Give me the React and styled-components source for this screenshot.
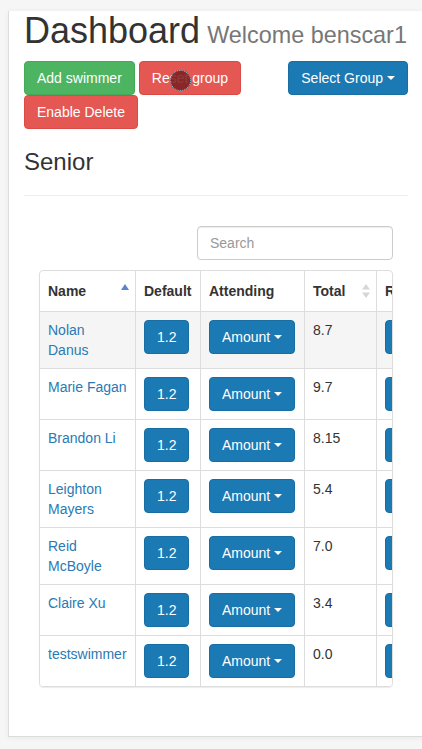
import React from "react";
import styled, { createGlobalStyle, css } from "styled-components";

const GlobalStyle = createGlobalStyle`
  html, body {
    margin: 0;
    padding: 0;
    overflow: hidden;
    background: #f6f6f6;
  }
  body {
    font-family: "Liberation Sans", Arial, sans-serif;
    font-size: 14px;
    line-height: 1.42857;
    color: #333;
    height: 749px;
  }
  * { box-sizing: border-box; }
`;

const Card = styled.div`
  margin-left: 8px;
  width: 416px;
  background: #fff;
  border: 1px solid #dcdcdc;
  border-top: none;
  box-shadow: 0 1px 6px rgba(0, 0, 0, 0.06);
  padding: 0 15px 49px;
`;

const Title = styled.h1`
  font-size: 36px;
  font-weight: 500;
  line-height: 1.1;
  margin: 11px 0 10px;
  color: #333;
  white-space: nowrap;
`;

const Small = styled.small`
  font-size: 65%;
  font-weight: 400;
  color: #777;
  margin-left: 7px;
`;

const Toolbar = styled.div`
  display: flex;
  align-items: flex-start;
`;

const LeftButtons = styled.div`
  flex: 1;
  display: flex;
  flex-wrap: wrap;
  column-gap: 4px;
  row-gap: 0;
`;

const variants = {
  success: css`
    background: #4db461;
    border-color: #45a957;
  `,
  danger: css`
    background: #e55752;
    border-color: #dc4a45;
  `,
  primary: css`
    background: #1b79b3;
    border-color: #186ea3;
  `,
};

const Btn = styled.button`
  position: relative;
  display: inline-flex;
  align-items: center;
  height: 34px;
  padding: 6px 12px;
  font-family: inherit;
  font-size: 14px;
  line-height: 20px;
  color: #fff;
  border: 1px solid transparent;
  border-radius: 4px;
  cursor: pointer;
  white-space: nowrap;
  ${(p) => variants[p.$variant || "primary"]}
`;

const Caret = styled.span`
  display: inline-block;
  width: 0;
  height: 0;
  margin-left: 4px;
  border-top: 4px solid #fff;
  border-left: 4px solid transparent;
  border-right: 4px solid transparent;
`;

const CursorDot = styled.span`
  position: absolute;
  left: 30px;
  top: 8px;
  width: 21px;
  height: 21px;
  border-radius: 50%;
  background: rgba(125, 32, 32, 0.88);
  border: 1.5px dotted #66cde8;
  pointer-events: none;
`;

const SectionTitle = styled.h3`
  font-size: 24px;
  font-weight: 500;
  line-height: 1.1;
  margin: 20px 0 10px;
  color: #333;
`;

const Rule = styled.hr`
  border: 0;
  border-top: 1px solid #eee;
  margin: 20px 0;
`;

const Inner = styled.div`
  padding: 0 15px;
`;

const SearchRow = styled.div`
  display: flex;
  justify-content: flex-end;
  padding: 10px 0;
`;

const Search = styled.input`
  width: 196px;
  height: 34px;
  padding: 6px 12px;
  font-family: inherit;
  font-size: 14px;
  color: #555;
  border: 1px solid #ccc;
  border-radius: 4px;
  box-shadow: inset 0 1px 1px rgba(0, 0, 0, 0.075);
  &::placeholder { color: #999; }
`;

const TableWrap = styled.div`
  border: 1px solid #ddd;
  border-radius: 4px;
  overflow: hidden;
  box-shadow: 0 1px 1px rgba(0, 0, 0, 0.08);
`;

const Table = styled.table`
  width: 426px;
  table-layout: fixed;
  border-collapse: separate;
  border-spacing: 0;
`;

const Th = styled.th`
  width: ${(p) => p.$w}px;
  padding: 0;
  text-align: left;
  font-weight: 700;
  border-left: ${(p) => (p.$first ? "none" : "1px solid #ddd")};
`;

const ThInner = styled.div`
  display: flex;
  align-items: center;
  justify-content: space-between;
  padding: 8px;
  padding-right: 6px;
  line-height: 24px;
  white-space: nowrap;
  overflow: hidden;
`;

const Tr = styled.tr`
  background: ${(p) => (p.$hover ? "#f5f5f5" : "#fff")};
`;

const Td = styled.td`
  padding: 8px;
  vertical-align: top;
  border-top: 1px solid #ddd;
  border-left: ${(p) => (p.$first ? "none" : "1px solid #ddd")};
  white-space: ${(p) => (p.$wrap ? "normal" : "nowrap")};
  line-height: 20px;
`;

const NameLink = styled.a`
  color: #2a7ab4;
  text-decoration: none;
`;

const SortUp = () => (
  <svg width="8" height="14" viewBox="0 0 8 14">
    <polygon points="4,0 8,6 0,6" fill="#5b84c9" />
  </svg>
);

const SortBoth = () => (
  <svg width="8" height="14" viewBox="0 0 8 14">
    <polygon points="4,0 8,5.5 0,5.5" fill="#d6d6d6" />
    <polygon points="0,8.5 8,8.5 4,14" fill="#d6d6d6" />
  </svg>
);

const swimmers = [
  { name: "Nolan Danus", total: "8.7" },
  { name: "Marie Fagan", total: "9.7" },
  { name: "Brandon Li", total: "8.15" },
  { name: "Leighton Mayers", total: "5.4" },
  { name: "Reid McBoyle", total: "7.0" },
  { name: "Claire Xu", total: "3.4" },
  { name: "testswimmer", total: "0.0" },
];

export default function App() {
  return (
    <>
      <GlobalStyle />
      <Card>
        <Title>
          Dashboard<Small>Welcome benscar1</Small>
        </Title>
        <Toolbar>
          <LeftButtons>
            <Btn $variant="success">Add swimmer</Btn>
            <Btn $variant="danger">
              Reset group
              <CursorDot />
            </Btn>
            <Btn $variant="danger">Enable Delete</Btn>
          </LeftButtons>
          <Btn $variant="primary">
            Select Group <Caret />
          </Btn>
        </Toolbar>
        <SectionTitle>Senior</SectionTitle>
        <Rule />
        <Inner>
          <SearchRow>
            <Search placeholder="Search" />
          </SearchRow>
          <TableWrap>
            <Table>
              <thead>
                <tr>
                  <Th $first $w={95}>
                    <ThInner>
                      Name <SortUp />
                    </ThInner>
                  </Th>
                  <Th $w={65}>
                    <ThInner>Default</ThInner>
                  </Th>
                  <Th $w={104}>
                    <ThInner>Attending</ThInner>
                  </Th>
                  <Th $w={72}>
                    <ThInner>
                      Total <SortBoth />
                    </ThInner>
                  </Th>
                  <Th $w={90}>
                    <ThInner>Remove</ThInner>
                  </Th>
                </tr>
              </thead>
              <tbody>
                {swimmers.map((s, i) => (
                  <Tr key={s.name} $hover={i === 0}>
                    <Td $first $wrap>
                      <NameLink href="#">{s.name}</NameLink>
                    </Td>
                    <Td>
                      <Btn $variant="primary">1.2</Btn>
                    </Td>
                    <Td>
                      <Btn $variant="primary">
                        Amount <Caret />
                      </Btn>
                    </Td>
                    <Td>{s.total}</Td>
                    <Td>
                      <Btn $variant="primary">Remove</Btn>
                    </Td>
                  </Tr>
                ))}
              </tbody>
            </Table>
          </TableWrap>
        </Inner>
      </Card>
    </>
  );
}
